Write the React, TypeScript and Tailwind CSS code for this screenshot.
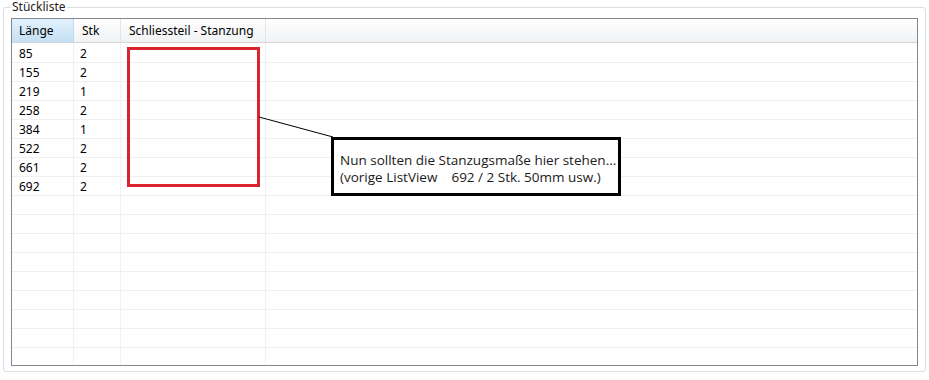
import React from 'react';

const rows: [string, string][] = [
  ['85', '2'],
  ['155', '2'],
  ['219', '1'],
  ['258', '2'],
  ['384', '1'],
  ['522', '2'],
  ['661', '2'],
  ['692', '2'],
];

const emptyRows = 9;

const App: React.FC = () => {
  const allRows = [...rows, ...Array.from({ length: emptyRows }, () => ['', ''] as [string, string])];

  return (
    <div className="w-[929px] h-[380px] bg-white overflow-hidden font-['Noto_Sans','Open_Sans',sans-serif] text-[12px] text-black">
      <fieldset className="relative ml-[3px] w-[922px] h-[372px] border border-[#d5dfe5] rounded-[3px] pl-[7px] pr-[7px] pt-[4px]">
        <legend className="px-[1px] text-[12px] leading-[14px] text-[#1e1e1e]">Stückliste</legend>

        {/* list view */}
        <div className="w-[907px] h-[348px] border border-[#828790] overflow-hidden bg-white">
          {/* header */}
          <div className="flex h-[24px] border-b border-[#d5d5d5] bg-gradient-to-b from-white to-[#f1f2f4]">
            <div className="w-[62px] shrink-0 border-r border-[#c0dcf3] bg-gradient-to-b from-[#e3f1fb] to-[#c4e0f5] pl-[7px] flex items-center">
              Länge
            </div>
            <div className="w-[47px] shrink-0 border-r border-[#e3e5e8] pl-[8px] flex items-center">Stk</div>
            <div className="w-[145px] shrink-0 border-r border-[#e3e5e8] pl-[8px] flex items-center">
              Schliessteil - Stanzung
            </div>
            <div className="flex-1" />
          </div>

          {/* rows */}
          {allRows.map(([len, stk], i) => (
            <div key={i} className={`flex border-b border-[#f0f0f0] ${i === 0 ? 'h-[20px]' : 'h-[19px]'}`}>
              <div className="w-[62px] shrink-0 border-r border-[#f0f0f0] pl-[7px] pt-[2px] flex items-center">{len}</div>
              <div className="w-[47px] shrink-0 border-r border-[#f0f0f0] pl-[6px] pt-[2px] flex items-center">{stk}</div>
              <div className="w-[145px] shrink-0 border-r border-[#f0f0f0]" />
              <div className="flex-1" />
            </div>
          ))}
        </div>

        {/* annotation: red box */}
        <div className="absolute left-[123px] top-[33px] w-[133px] h-[140px] border-[3px] border-[#d9232e]" />

        {/* annotation: connector line */}
        <svg className="absolute left-[252px] top-[99px]" width="80" height="26" viewBox="0 0 80 26">
          <line x1="3" y1="4" x2="77" y2="24" stroke="#000" strokeWidth="1" />
        </svg>

        {/* annotation: callout */}
        <div className="absolute left-[327px] top-[123px] w-[290px] h-[59px] border-[3px] border-black bg-white pl-[6px] pt-[12px] font-['Open_Sans',sans-serif] text-[13.5px] leading-[17px] text-[#1a1a1a]">
          <div>Nun sollten die Stanzugsmaße hier stehen...</div>
          <div className="whitespace-pre">(vorige ListView    692 / 2 Stk. 50mm usw.)</div>
        </div>
      </fieldset>
    </div>
  );
};

export default App;
